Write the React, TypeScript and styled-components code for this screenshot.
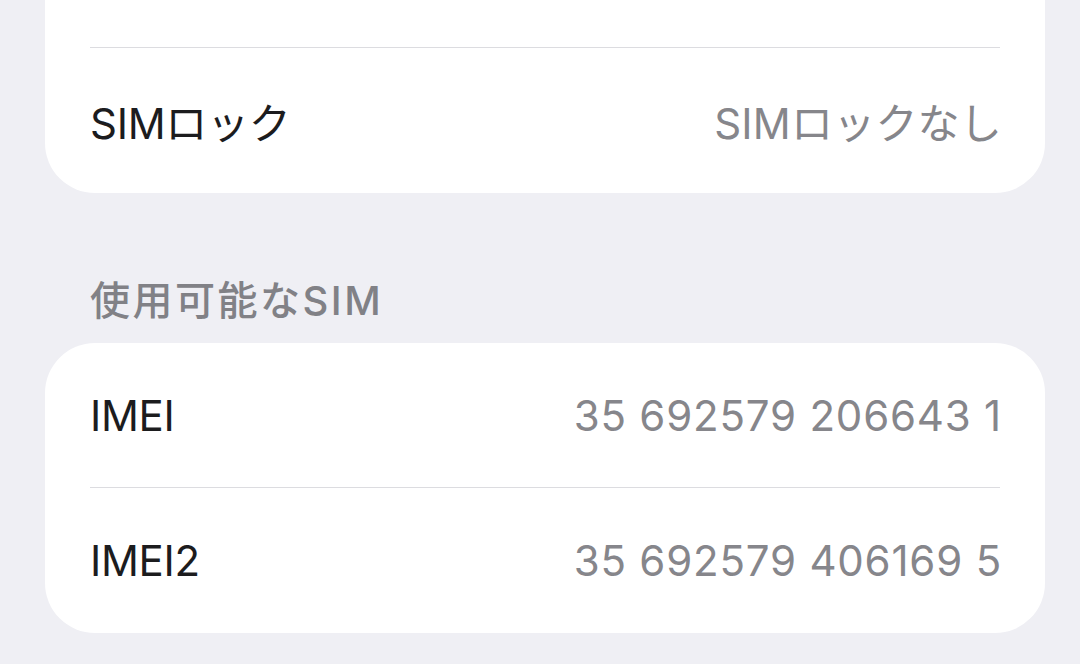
import React from 'react';
import styled, { createGlobalStyle } from 'styled-components';

const GlobalStyle = createGlobalStyle`
  html, body {
    margin: 0;
    padding: 0;
    background: #efeff4;
  }
  body {
    width: 1080px;
    height: 664px;
    overflow: hidden;
    font-family: Inter, "Noto Sans CJK JP", sans-serif;
    -webkit-font-smoothing: antialiased;
  }
`;

const Screen = styled.div`
  width: 1080px;
  height: 664px;
  overflow: hidden;
  background: #efeff4;
`;

// the list is scrolled, so the first group starts above the top edge
const ScrollContent = styled.div`
  display: flex;
  flex-direction: column;
  padding: 0 35px 0 45px;
  margin-top: -97px;
`;

const Group = styled.div`
  background: #ffffff;
  border-radius: 50px;
  overflow: hidden;
`;

const Row = styled.div<{ $divider?: boolean }>`
  height: 145px;
  margin: 0 45px;
  display: flex;
  align-items: center;
  justify-content: space-between;
  box-sizing: border-box;
  border-bottom: ${({ $divider }) => ($divider ? '1.5px solid #dcdce0' : 'none')};
`;

const Label = styled.span`
  font-size: 42px;
  color: #1c1c1e;
  letter-spacing: -0.3px;
`;

const Value = styled.span<{ $numeric?: boolean }>`
  font-size: 42px;
  color: #86868b;
  letter-spacing: ${({ $numeric }) => ($numeric ? '0.8px' : '0.2px')};
  margin-right: -2px;
`;

const SectionHeader = styled.div`
  padding: 76px 0 0 45px;
  height: 150px;
  box-sizing: border-box;
  font-size: 40px;
  font-weight: 500;
  color: #818186;
  letter-spacing: 2.5px;
`;

type Item = { label: string; value: string };

const simItems: Item[] = [
  { label: 'IMEI', value: '35 692579 206643 1' },
  { label: 'IMEI2', value: '35 692579 406169 5' },
];

const App: React.FC = () => {
  return (
    <Screen>
      <GlobalStyle />
      <ScrollContent>
        <Group>
          <Row $divider />
          <Row>
            <Label>SIMロック</Label>
            <Value>SIMロックなし</Value>
          </Row>
        </Group>

        <SectionHeader>使用可能なSIM</SectionHeader>

        <Group>
          {simItems.map((item, i) => (
            <Row key={item.label} $divider={i < simItems.length - 1}>
              <Label>{item.label}</Label>
              <Value $numeric>{item.value}</Value>
            </Row>
          ))}
        </Group>
      </ScrollContent>
    </Screen>
  );
};

export default App;
